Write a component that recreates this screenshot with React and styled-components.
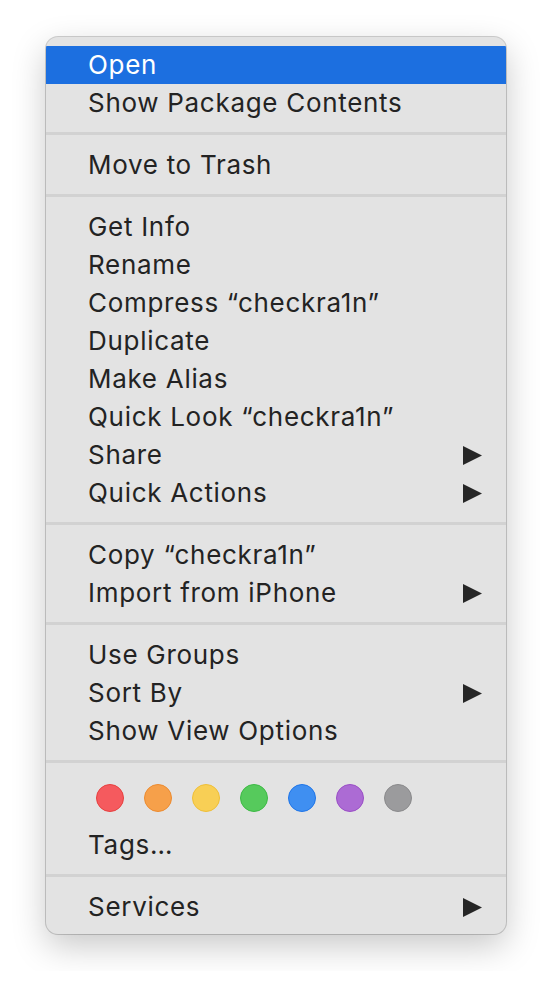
import React from 'react';
import styled, { createGlobalStyle } from 'styled-components';

const GlobalStyle = createGlobalStyle`
  html, body {
    margin: 0;
    padding: 0;
    background: #fff;
  }
`;

const sections = [
  [{ label: 'Open', active: true }, { label: 'Show Package Contents' }],
  [{ label: 'Move to Trash' }],
  [
    { label: 'Get Info' },
    { label: 'Rename' },
    { label: 'Compress “checkra1n”' },
    { label: 'Duplicate' },
    { label: 'Make Alias' },
    { label: 'Quick Look “checkra1n”' },
    { label: 'Share', sub: true },
    { label: 'Quick Actions', sub: true },
  ],
  [{ label: 'Copy “checkra1n”' }, { label: 'Import from iPhone', sub: true }],
  [{ label: 'Use Groups' }, { label: 'Sort By', sub: true }, { label: 'Show View Options' }],
];

const tagColors = [
  { fill: '#f55a5e', ring: '#e7403f' },
  { fill: '#f6a04a', ring: '#ec8b30' },
  { fill: '#f8cf55', ring: '#efbf38' },
  { fill: '#56ca5c', ring: '#3db945' },
  { fill: '#3f8ff1', ring: '#1f75e8' },
  { fill: '#ac6bd4', ring: '#9a4ec6' },
  { fill: '#9b9b9d', ring: '#8a8a8c' },
];

const Arrow = () => (
  <svg width="19" height="19" viewBox="0 0 19 19">
    <polygon points="0,0 19,9.5 0,19" fill="#262626" />
  </svg>
);

const Item = ({ label, active, sub }) => (
  <Row $active={active}>
    <Label>{label}</Label>
    {sub && <Arrow />}
  </Row>
);

const App = () => (
  <>
    <GlobalStyle />
    <Page>
      <Menu>
        {sections.map((items, i) => (
          <React.Fragment key={i}>
            {i > 0 && <Separator />}
            {items.map((it) => (
              <Item key={it.label} {...it} />
            ))}
          </React.Fragment>
        ))}
        <Separator />
        <Dots>
          {tagColors.map((c) => (
            <Dot key={c.fill} $fill={c.fill} $ring={c.ring} />
          ))}
        </Dots>
        <Item label="Tags…" />
        <Separator />
        <Item label="Services" sub />
      </Menu>
    </Page>
  </>
);

const Page = styled.div`
  padding: 37px 46px;
  font-family: Inter, "Liberation Sans", sans-serif;
`;

const Menu = styled.div`
  box-sizing: border-box;
  width: 460px;
  padding: 9px 0 8px;
  background: #e3e3e3;
  border-radius: 12px;
  box-shadow: 0 0 0 1px rgba(0, 0, 0, 0.18), 0 12px 34px rgba(0, 0, 0, 0.22);
  overflow: hidden;
`;

const Row = styled.div`
  height: 38px;
  display: flex;
  align-items: center;
  justify-content: space-between;
  padding: 0 24px 0 42px;
  background: ${(p) => (p.$active ? '#1c6fe0' : 'transparent')};
  color: ${(p) => (p.$active ? '#fff' : '#232323')};
`;

const Label = styled.span`
  font-size: 26px;
  letter-spacing: 0.7px;
  line-height: 1;
  margin-top: -1px;
`;

const Separator = styled.div`
  height: 3px;
  margin: 10px 0 11px;
  background: #d2d2d2;
`;

const Dots = styled.div`
  display: flex;
  gap: 20px;
  padding: 10px 0 14px 50px;
`;

const Dot = styled.span`
  box-sizing: border-box;
  width: 28px;
  height: 28px;
  border-radius: 50%;
  background: ${(p) => p.$fill};
  border: 1.5px solid ${(p) => p.$ring};
`;

export default App;
